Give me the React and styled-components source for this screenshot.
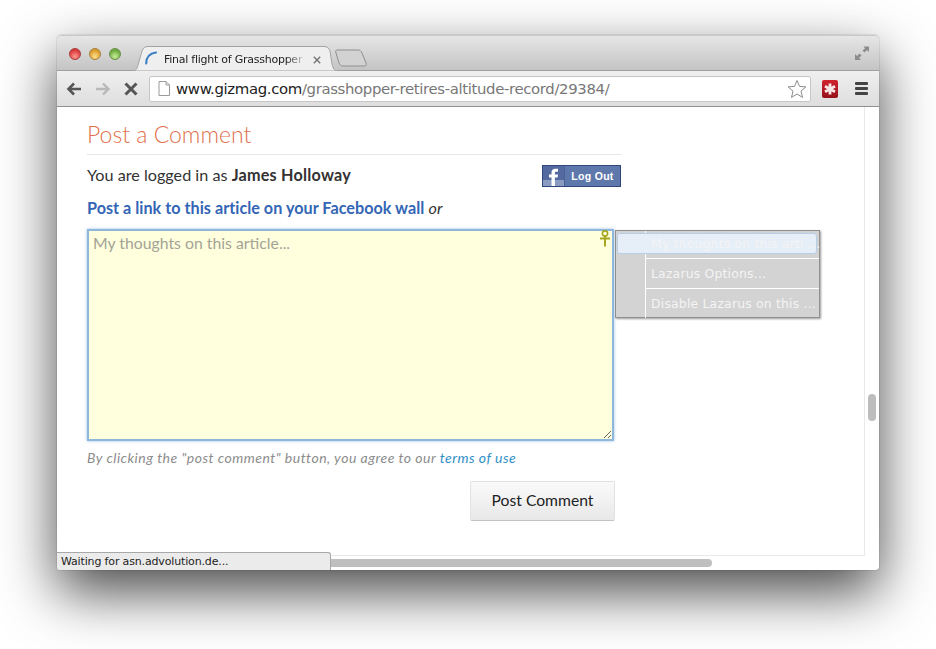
import styled, { createGlobalStyle } from "styled-components";

const GlobalStyle = createGlobalStyle`
  html, body {
    margin: 0;
    background: #fff;
    overflow: hidden;
  }
`;

const Page = styled.div`
  width: 936px;
  height: 649px;
  box-sizing: border-box;
  padding: 35px 0 0 57px;
  overflow: hidden;
`;

const Window = styled.div`
  position: relative;
  width: 822px;
  height: 535px;
  display: flex;
  flex-direction: column;
  border-radius: 5px 5px 3px 3px;
  overflow: hidden;
  background: #fff;
  box-shadow: 0 22px 56px rgba(0, 0, 0, 0.72), 0 0 1px rgba(0, 0, 0, 0.7);
`;

const TabStrip = styled.div`
  height: 36px;
  flex: none;
  box-sizing: border-box;
  display: flex;
  align-items: flex-end;
  padding-left: 75px;
  background: linear-gradient(#e6e6e6, #c4c4c4);
  border-top: 1px solid #c9c9c9;
  border-bottom: 1px solid #9f9f9f;
  position: relative;
`;

const Lights = styled.div`
  position: absolute;
  left: 12px;
  top: 12px;
  display: flex;
  gap: 8px;
`;

const Light = styled.span`
  width: 12px;
  height: 12px;
  border-radius: 50%;
  box-sizing: border-box;
  border: 1px solid ${(p) => p.$edge};
  background: radial-gradient(circle at 50% 75%, ${(p) => p.$glow}, ${(p) => p.$color} 70%);
`;

const Tab = styled.div`
  position: relative;
  width: 206px;
  height: 25px;
  margin-bottom: -1px;
  display: flex;
  align-items: center;
  padding: 2px 0 0 13px;
  box-sizing: border-box;
  font: 11px "DejaVu Sans", sans-serif;
  letter-spacing: -0.25px;
  color: #222;
`;

const TabShape = styled.svg`
  position: absolute;
  inset: 0;
  width: 100%;
  height: 100%;
`;

const Spinner = styled.svg`
  position: relative;
  width: 12px;
  height: 14px;
  flex: none;
  margin: -3px 7px 0 0;
`;

const TabTitle = styled.span`
  position: relative;
  width: 143px;
  white-space: nowrap;
  -webkit-mask-image: linear-gradient(to right, #000 85%, transparent);
  mask-image: linear-gradient(to right, #000 85%, transparent);
`;

const TabClose = styled.svg`
  position: relative;
  width: 8px;
  height: 8px;
  flex: none;
  margin-left: 6px;
`;

const NewTab = styled.svg`
  width: 34px;
  height: 18px;
  margin: 0 0 3px -4px;
`;

const Expand = styled.svg`
  position: absolute;
  right: 9px;
  top: 9px;
  width: 16px;
  height: 16px;
`;

const Toolbar = styled.div`
  height: 36px;
  flex: none;
  box-sizing: border-box;
  display: flex;
  align-items: center;
  padding: 0 11px 0 9px;
  background: linear-gradient(#efefef, #dedede);
  border-bottom: 1px solid #8f8f8f;
`;

const NavIcon = styled.svg`
  width: 16px;
  height: 16px;
  flex: none;
  margin-right: ${(p) => p.$gap}px;
`;

const Omnibox = styled.div`
  width: 662px;
  height: 26px;
  flex: none;
  box-sizing: border-box;
  display: flex;
  align-items: center;
  padding: 0 3px 0 8px;
  background: #fff;
  border: 1px solid #c6c6c6;
  border-radius: 2px;
  font: 14.9px "DejaVu Sans", sans-serif;
  letter-spacing: -0.36px;
  white-space: nowrap;
`;

const Host = styled.span`
  color: #222;
`;

const UrlPath = styled.span`
  color: #777;
  flex: 1;
`;

const PageIcon = styled.svg`
  width: 12px;
  height: 15px;
  flex: none;
  margin-right: 6px;
`;

const Star = styled.svg`
  width: 20px;
  height: 20px;
  flex: none;
`;

const LastPass = styled.div`
  width: 16px;
  height: 18px;
  flex: none;
  margin: 0 17px 0 11px;
  border-radius: 2px;
  background: linear-gradient(#d2232f, #96101a);
  display: flex;
  align-items: center;
  justify-content: center;
`;

const Hamburger = styled.div`
  width: 13px;
  flex: none;
  display: flex;
  flex-direction: column;
  gap: 2px;
  span {
    height: 3px;
    background: #444;
    border-radius: 1px;
  }
`;

const Viewport = styled.div`
  flex: 1;
  min-height: 0;
  display: flex;
  flex-direction: column;
`;

const ContentRow = styled.div`
  flex: 1;
  min-height: 0;
  display: flex;
`;

const Content = styled.main`
  flex: 1;
  box-sizing: border-box;
  padding: 14px 0 0 30px;
  border-right: 1px solid #e9e9e9;
  border-bottom: 1px solid #e9e9e9;
  color: #333;
  font: 16.2px Lato, sans-serif;
`;

const VerticalBar = styled.div`
  width: 14px;
  flex: none;
  position: relative;
`;

const VerticalThumb = styled.div`
  position: absolute;
  left: 3px;
  top: 287px;
  width: 8px;
  height: 27px;
  border-radius: 4px;
  background: #bdbdbd;
`;

const HorizontalBar = styled.div`
  height: 14px;
  flex: none;
  position: relative;
`;

const HorizontalThumb = styled.div`
  position: absolute;
  left: 0;
  top: 3px;
  width: 655px;
  height: 8px;
  border-radius: 4px;
  background: #bfbfbf;
`;

const Column = styled.div`
  width: 534px;
  display: flex;
  flex-direction: column;
`;

const Heading = styled.h2`
  margin: 0;
  padding-bottom: 7px;
  border-bottom: 1px solid #e6e6e6;
  font: 300 23px/26px Lato, sans-serif;
  color: #e0704a;
`;

const LoginRow = styled.div`
  display: flex;
  align-items: center;
  justify-content: space-between;
  height: 22px;
  margin-top: 10px;
`;

const LoginText = styled.span`
  margin-top: -3px;
  b {
    letter-spacing: 0.22px;
  }
`;

const LogoutButton = styled.button`
  width: 79px;
  height: 22px;
  padding: 0;
  display: flex;
  align-items: stretch;
  box-sizing: border-box;
  border: 1px solid #2f477a;
  background: #5f78ab;
  color: #fff;
  font: bold 10.5px "Liberation Sans", sans-serif;
  letter-spacing: 0.3px;
`;

const LogoutIcon = styled.span`
  width: 21px;
  flex: none;
  display: flex;
  justify-content: center;
  align-items: flex-end;
  border-right: 1px solid #4a6296;
  background: linear-gradient(#54699f 70%, #8a9bc1 70%);
`;

const LogoutLabel = styled.span`
  flex: 1;
  align-self: center;
`;

const WallRow = styled.div`
  margin-top: 11px;
  line-height: 20px;
  color: #333;
`;

const WallLink = styled.a`
  color: #3366b5;
  font-weight: 700;
  letter-spacing: 0.02px;
`;

const Field = styled.div`
  position: relative;
  width: 527px;
  height: 212px;
  margin-top: 11px;
`;

const Comment = styled.textarea`
  display: block;
  width: 100%;
  height: 100%;
  box-sizing: border-box;
  margin: 0;
  padding: 2px 4px;
  background: #ffffdd;
  border: 2px solid #8fb7dc;
  box-shadow: 0 0 3px #9cc3e6;
  outline: none;
  font: 15.8px Lato, sans-serif;
  &::placeholder {
    color: #a3a396;
    opacity: 1;
  }
`;

const Ankh = styled.svg`
  position: absolute;
  right: 3px;
  top: 1px;
  width: 12px;
  height: 17px;
`;

const Menu = styled.div`
  position: absolute;
  left: 528px;
  top: 1px;
  width: 205px;
  height: 88px;
  box-sizing: border-box;
  background: #d3d3d3;
  border: 1px solid #8f8f8f;
  box-shadow: 1px 1px 2px rgba(0, 0, 0, 0.4);
  font: 12.4px "DejaVu Sans", sans-serif;
  letter-spacing: 0.2px;
  color: #f4f4f4;
`;

const MenuItem = styled.div`
  box-sizing: border-box;
  margin-left: 29px;
  padding-left: 5px;
  display: flex;
  align-items: center;
  white-space: nowrap;
  border-left: 1px solid #fff;
  border-top: ${(p) => (p.$first ? "none" : "1px solid #fff")};
  height: ${(p) => (p.$first ? 27 : 30)}px;
`;

const MenuHighlight = styled.div`
  position: absolute;
  left: 1px;
  top: 2px;
  width: 200px;
  height: 21px;
  box-sizing: border-box;
  padding-left: 33px;
  display: flex;
  align-items: center;
  white-space: nowrap;
  border: 1px solid #b5cfea;
  border-radius: 3px;
  background: #e6eef8;
`;

const Terms = styled.p`
  margin: 9px 0 0;
  font: italic 14px/16px Lato, sans-serif;
  letter-spacing: 0.49px;
  color: #8c8c8c;
`;

const TermsLink = styled.a`
  color: #2f8fc7;
`;

const Actions = styled.div`
  width: 528px;
  display: flex;
  justify-content: flex-end;
  margin-top: 15px;
`;

const PostButton = styled.button`
  width: 145px;
  height: 40px;
  padding: 0 0 2px;
  border: 1px solid #e2e2e2;
  border-bottom-color: #c2c2c2;
  border-radius: 2px;
  background: linear-gradient(#fafafa, #e8e8e8);
  color: #222;
  font: 15.7px Lato, sans-serif;
`;

const StatusBubble = styled.div`
  position: absolute;
  left: 0;
  bottom: 0;
  width: 274px;
  height: 18px;
  box-sizing: border-box;
  padding-left: 4px;
  display: flex;
  align-items: center;
  background: #ebebeb;
  border: 1px solid #a8a8a8;
  border-left: none;
  border-bottom: none;
  border-radius: 0 3px 0 0;
  font: 11px "DejaVu Sans", sans-serif;
  letter-spacing: -0.15px;
  color: #222;
`;

export default function App() {
  return (
    <>
      <GlobalStyle />
      <Page>
        <Window>
          <TabStrip>
            <Lights>
              <Light $color="#d8383a" $glow="#ff9a90" $edge="#a83c3c" />
              <Light $color="#d99a2b" $glow="#ffe08a" $edge="#a8803c" />
              <Light $color="#6aa83e" $glow="#c8f098" $edge="#6a9048" />
            </Lights>
            <Tab>
              <TabShape viewBox="0 0 206 25" preserveAspectRatio="none">
                <path
                  d="M0 25 C4 25 5 23 6 19 L10 5 C11 2 13 0.5 16 0.5 H192 C195 0.5 197 2 198 5 L200 18 C201 22 202 25 206 25 Z"
                  fill="#efefef"
                  stroke="#a3a3a3"
                />
              </TabShape>
              <Spinner viewBox="0 0 12 14">
                <path d="M1.2 12.5 C1.2 7 4 2.5 11 1.5" fill="none" stroke="#3d7fc4" strokeWidth="2.2" strokeLinecap="round" />
              </Spinner>
              <TabTitle>Final flight of Grasshopper</TabTitle>
              <TabClose viewBox="0 0 8 8">
                <path d="M.8 .8 L7.2 7.2 M7.2 .8 L.8 7.2" stroke="#777" strokeWidth="1.5" />
              </TabClose>
            </Tab>
            <NewTab viewBox="0 0 34 18">
              <path
                d="M3 1 H24 C26 1 27 2 28 4 L32 14 C33 16 32 17 30 17 H9 C7 17 6 16 5 14 L2 4 C1 2 2 1 3 1 Z"
                fill="#d2d2d2"
                stroke="#8f8f8f"
              />
            </NewTab>
            <Expand viewBox="0 0 16 16">
              <path d="M9.5 1.5 H15 V7 L13 5 L10.5 7.5 L8.5 5.5 L11 3.5 Z" fill="#8c8c8c" />
              <path d="M1 9 V15 H7 L5 13 L7.5 10.5 L5.5 8.5 L3 11 Z" fill="#8c8c8c" />
            </Expand>
          </TabStrip>
          <Toolbar>
            <NavIcon $gap={13} viewBox="0 0 16 16">
              <path d="M15 8 H3 M8 2.5 L2.5 8 L8 13.5" fill="none" stroke="#555" strokeWidth="2.6" />
            </NavIcon>
            <NavIcon $gap={12} viewBox="0 0 16 16">
              <path d="M1 8 H13 M8 2.5 L13.5 8 L8 13.5" fill="none" stroke="#b8b8b8" strokeWidth="2.4" />
            </NavIcon>
            <NavIcon $gap={10} viewBox="0 0 16 16">
              <path d="M2.5 2.5 L13.5 13.5 M13.5 2.5 L2.5 13.5" fill="none" stroke="#555" strokeWidth="3" />
            </NavIcon>
            <Omnibox>
              <PageIcon viewBox="0 0 12 15">
                <path d="M1 .5 H8 L11.5 4 V14.5 H1 Z M8 .5 V4 H11.5" fill="#fff" stroke="#9a9a9a" />
              </PageIcon>
              <Host>www.gizmag.com</Host>
              <UrlPath>/grasshopper-retires-altitude-record/29384/</UrlPath>
              <Star viewBox="0 0 20 20">
                <path
                  d="M10 1.5 L12.5 7.4 L18.9 7.9 L14 12.1 L15.5 18.4 L10 15 L4.5 18.4 L6 12.1 L1.1 7.9 L7.5 7.4 Z"
                  fill="#fff"
                  stroke="#8a8a8a"
                />
              </Star>
            </Omnibox>
            <LastPass>
              <svg width="12" height="12" viewBox="0 0 12 12">
                <path d="M6 .5 V11.5 M1 3.2 L11 8.8 M11 3.2 L1 8.8" stroke="#f6e6e6" strokeWidth="2.8" />
              </svg>
            </LastPass>
            <Hamburger>
              <span />
              <span />
              <span />
            </Hamburger>
          </Toolbar>
          <Viewport>
            <ContentRow>
              <Content>
                <Column>
                  <Heading>Post a Comment</Heading>
                  <LoginRow>
                    <LoginText>
                      You are logged in as <b>James Holloway</b>
                    </LoginText>
                    <LogoutButton>
                      <LogoutIcon>
                        <svg width="11" height="18" viewBox="0 0 11 18">
                          <path d="M3.5 18 V9.5 H1 V6.5 H3.5 V4.5 C3.5 2 5 .8 7.2 .8 H10 V3.8 H8.2 C7.2 3.8 6.9 4.2 6.9 5 V6.5 H10 L9.6 9.5 H6.9 V18 Z" fill="#fff" />
                        </svg>
                      </LogoutIcon>
                      <LogoutLabel>Log Out</LogoutLabel>
                    </LogoutButton>
                  </LoginRow>
                  <WallRow>
                    <WallLink>Post a link to this article on your Facebook wall</WallLink> <i>or</i>
                  </WallRow>
                  <Field>
                    <Comment placeholder="My thoughts on this article..." />
                    <Ankh viewBox="0 0 12 17">
                      <circle cx="6" cy="3.5" r="2.6" fill="none" stroke="#a8a820" strokeWidth="1.6" />
                      <path d="M6 6 V16.5 M1 8.5 H11" stroke="#a8a820" strokeWidth="2" />
                    </Ankh>
                    <Menu>
                      <MenuItem $first />
                      <MenuItem>Lazarus Options...</MenuItem>
                      <MenuItem>Disable Lazarus on this ...</MenuItem>
                      <MenuHighlight>My thoughts on this arti ...</MenuHighlight>
                    </Menu>
                  </Field>
                  <Terms>
                    By clicking the "post comment" button, you agree to our <TermsLink>terms of use</TermsLink>
                  </Terms>
                  <Actions>
                    <PostButton>Post Comment</PostButton>
                  </Actions>
                </Column>
              </Content>
              <VerticalBar>
                <VerticalThumb />
              </VerticalBar>
            </ContentRow>
            <HorizontalBar>
              <HorizontalThumb />
            </HorizontalBar>
          </Viewport>
          <StatusBubble>Waiting for asn.advolution.de...</StatusBubble>
        </Window>
      </Page>
    </>
  );
}
